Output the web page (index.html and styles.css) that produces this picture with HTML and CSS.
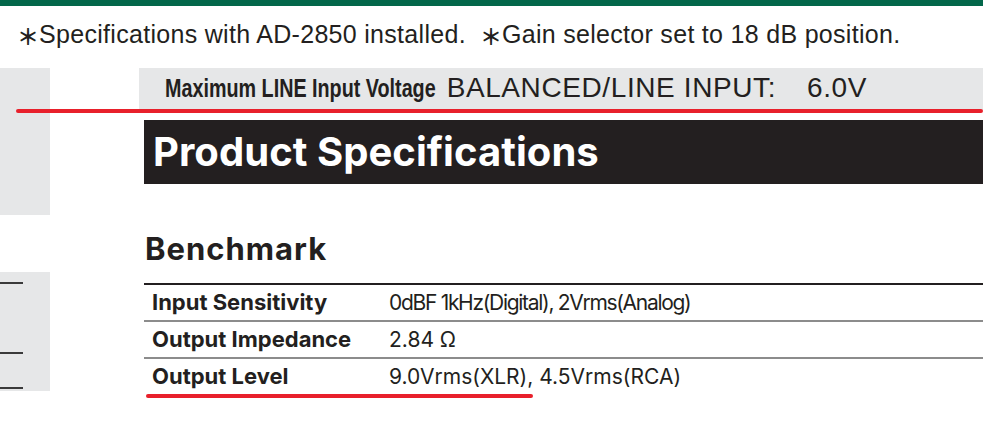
FILE: index.html
```html
<!DOCTYPE html>
<html lang="en">
<head>
<meta charset="utf-8">
<title>Product Specifications</title>
<link rel="stylesheet" href="styles.css">
</head>
<body>
<div class="topbar"></div>
<p class="note"><span class="ast">＊</span>Specifications with AD-2850 installed.<span class="ast ast2">＊</span>Gain selector set to 18 dB position.</p>
<div class="page">
  <aside class="side">
    <div class="side-block first"></div>
    <div class="side-block second">
      <span class="side-line l1"></span>
      <span class="side-line l2"></span>
      <span class="side-line l3"></span>
    </div>
  </aside>
  <main class="main">
    <div class="voltage">
      <span class="voltage-label">Maximum LINE Input Voltage</span>
      <span class="voltage-value">BALANCED/LINE INPUT:<span class="gap"></span>6.0V</span>
    </div>
    <section class="content">
      <h1 class="title">Product Specifications</h1>
      <h2 class="subtitle">Benchmark</h2>
      <div class="table-wrap">
        <table class="specs">
          <tr><th>Input Sensitivity</th><td class="tight">0dBF 1kHz(Digital), 2Vrms(Analog)</td></tr>
          <tr><th>Output Impedance</th><td>2.84 Ω</td></tr>
          <tr><th>Output Level</th><td>9.0Vrms(XLR), 4.5Vrms(RCA)</td></tr>
        </table>
        <div class="mark mark-row"></div>
      </div>
    </section>
  </main>
  <div class="mark mark-voltage"></div>
</div>
</body>
</html>
```
FILE: styles.css
```css
* { box-sizing: border-box; }
html, body { margin: 0; padding: 0; background: #fff; }
body { width: 983px; height: 427px; overflow: hidden; color: #231f20; }

.topbar { height: 6px; background: #03674a; }

.note {
  margin: 0;
  height: 62px;
  padding: 0 0 5px 17px;
  display: flex;
  align-items: center;
  font-family: "Liberation Sans", Arial, sans-serif;
  font-size: 25px;
  color: #231f20;
  letter-spacing: 0.3px;
  white-space: nowrap;
}
.ast { font-family: "Noto Sans CJK JP", sans-serif; font-size: 22px; margin-right: 0; font-weight: 700; letter-spacing: 0; }
.ast2 { margin-left: 14px; }

.page {
  position: relative;
  display: grid;
  grid-template-columns: 50px 1fr;
  column-gap: 89px;
}

.side { display: flex; flex-direction: column; }
.side-block { background: #e6e7e8; position: relative; }
.side-block.first { height: 147px; }
.side-block.second { height: 119px; margin-top: 57px; display: flex; flex-direction: column; }
.side-line { display: block; width: 23px; height: 2px; background: #3a3a3a; }
.side-line.l1 { margin-top: 10px; }
.side-line.l2 { margin-top: 68px; }
.side-line.l3 { margin-top: 33px; }

.main { min-width: 0; }

.voltage {
  height: 42px;
  background: #e6e7e8;
  display: flex;
  align-items: center;
  padding: 0 0 2px 26px;
  white-space: nowrap;
}
.voltage-label {
  display: inline-block;
  font-family: "Liberation Sans", Arial, sans-serif;
  font-weight: bold;
  font-size: 25px;
  transform: scaleX(0.79);
  transform-origin: left center;
  margin-right: -61px;
  color: #231f20;
}
.voltage-value {
  font-family: "Liberation Sans", Arial, sans-serif;
  font-size: 28px;
  letter-spacing: 0.6px;
  color: #231f20;
}
.gap { display: inline-block; width: 31px; }

.content { padding-left: 5px; }

.title {
  margin: 10px 0 0;
  height: 64px;
  background: #231f20;
  color: #fff;
  font-family: Inter, "Noto Sans", sans-serif;
  font-weight: 700;
  font-size: 40px;
  line-height: 64px;
  padding-left: 9px;
  letter-spacing: 0.05px;
}

.subtitle {
  margin: 45px 0 0;
  font-family: Inter, "Noto Sans", sans-serif;
  font-weight: 700;
  font-size: 31px;
  line-height: 40px;
  height: 40px;
  letter-spacing: 1px;
  padding-left: 1px;
}

.table-wrap { position: relative; margin-top: 14px; }
.specs {
  width: 100%;
  border-collapse: collapse;
  font-family: Inter, "Noto Sans", sans-serif;
  border-top: 2px solid #231f20;
}
.specs th, .specs td {
  padding: 0;
  height: 35px;
  line-height: 35px;
  text-align: left;
  vertical-align: middle;
  white-space: nowrap;
}
.specs tr + tr th, .specs tr + tr td { border-top: 2px solid #8c8c8c; }
.specs th {
  width: 245px;
  padding-left: 8px;
  font-weight: 700;
  font-size: 22px;
}
.specs td {
  font-weight: 400;
  font-size: 21px;
}
.specs td.tight { letter-spacing: -1.3px; }

.mark { position: absolute; background: #e8202b; border-radius: 2px; height: 4px; }
.mark-voltage { left: 16px; right: 0; top: 41px; }
.mark-row { left: 2px; width: 387px; top: 111px; }
```
